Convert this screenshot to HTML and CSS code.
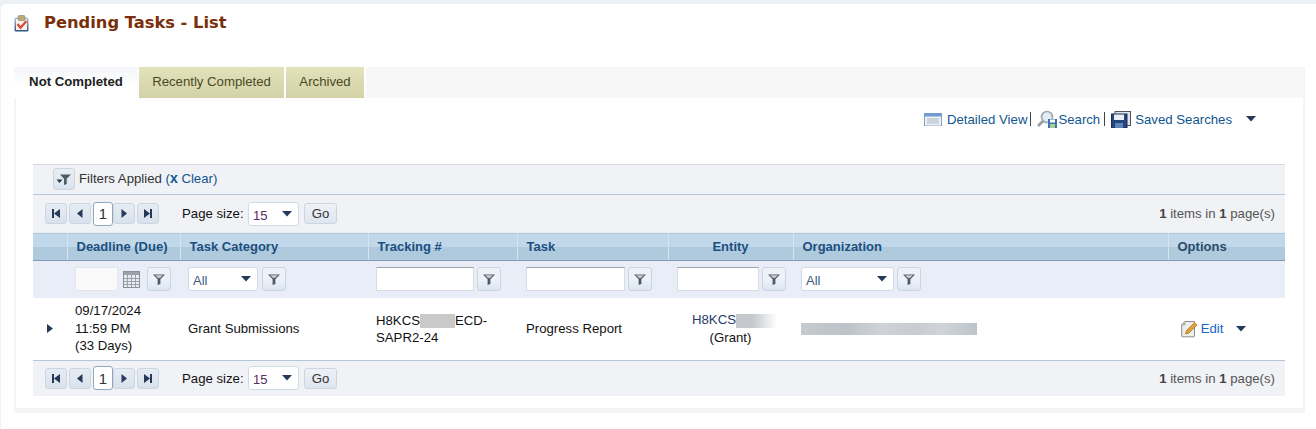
FILE: index.html
```html
<!DOCTYPE html>
<html lang="en">
<head>
<meta charset="utf-8">
<title>Pending Tasks - List</title>
<link rel="stylesheet" href="styles.css">
</head>
<body>
<svg class="defs" width="0" height="0" aria-hidden="true">
  <defs>
    <symbol id="funnel" viewBox="0 0 14 14"><path d="M1 2.5h12L8.4 7.2V12L5.6 13V7.2z" fill="#4f5b66"/><path d="M3.2 3.2h7.6L8 6H6z" fill="#c5ccd3"/></symbol>
    <symbol id="caret" viewBox="0 0 10 6"><path d="M0 0h10L5 5.5z" fill="#25395a"/></symbol>
    <linearGradient id="board" x1="0" y1="0" x2="0" y2="1"><stop offset="0" stop-color="#b9c6da"/><stop offset="1" stop-color="#2f4f86"/></linearGradient>
  </defs>
</svg>
<main class="page">
  <header class="title-row">
    <svg class="title-icon" viewBox="0 0 15 17" width="15" height="17" aria-hidden="true">
      <rect x="0.5" y="2.5" width="14" height="14" rx="1.5" fill="url(#board)"/>
      <rect x="2" y="4" width="11" height="11" fill="#f6f3ee"/>
      <rect x="4" y="0.5" width="7" height="5" rx="1.2" fill="#b9a97f" stroke="#8d8263" stroke-width=".6"/>
      <path d="M3.5 9l3 3.7L12.5 6" fill="none" stroke="#e2452f" stroke-width="2.2"/>
    </svg>
    <h1>Pending Tasks - List</h1>
  </header>

  <section class="panel">
    <nav class="tabs">
      <a class="tab tab-active">Not Completed</a>
      <a class="tab tab-recent">Recently Completed</a>
      <a class="tab tab-arch">Archived</a>
      <span class="tab-fill"></span>
    </nav>

    <div class="actions">
      <svg class="ic-view" viewBox="0 0 18 13" width="18" height="13" aria-hidden="true">
        <rect x="0.5" y="0.5" width="17" height="12.5" fill="#eef3f8" stroke="#7f9fc4"/>
        <rect x="0.5" y="0.5" width="17" height="3" fill="#6f9bd0"/>
        <path d="M3 6h12M3 8h12M3 10h12" stroke="#a9b3bd"/>
      </svg>
      <a class="act act-detail">Detailed View</a><span class="sep"></span>
      <svg class="ic-search" viewBox="0 0 21 19" width="21" height="19" aria-hidden="true">
        <circle cx="10" cy="7" r="5.5" fill="#e4ecf3" stroke="#9aa6b0" stroke-width="1.6"/>
        <path d="M6 11l-5 5" stroke="#9a9a9a" stroke-width="2.6"/>
        <rect x="11" y="9" width="9" height="9" fill="#3f73ad"/>
        <rect x="13" y="9.5" width="5" height="3" fill="#fff"/>
        <rect x="13" y="14" width="5" height="4" fill="#a8d08d"/>
      </svg>
      <a class="act">Search</a><span class="sep sep-wide"></span>
      <svg class="ic-save" viewBox="0 0 20 17" width="20" height="17" aria-hidden="true">
        <rect x="4" y="0.5" width="15.5" height="14" fill="#dfe5ec" stroke="#4b5563"/>
        <rect x="0.5" y="3" width="15.5" height="14" fill="#24467c" stroke="#1c2f52"/>
        <rect x="3" y="3.5" width="10" height="5.5" fill="#e8eef5"/>
        <rect x="4" y="12" width="8" height="5" fill="#5c86bb"/>
      </svg>
      <a class="act act-saved">Saved Searches</a>
      <svg class="caret act-caret" width="10" height="6" aria-hidden="true"><use href="#caret"/></svg>
    </div>

    <div class="grid">
      <div class="filter-note">
        <span class="btn-square"><svg viewBox="0 0 16 14" width="16" height="14" aria-hidden="true"><path d="M4 2.5h11l-4.3 4.3V12L8 13V6.8z" fill="#4f5b66"/><path d="M0.5 7.5h6L3.5 11z" fill="#25395a"/></svg></span>
        <span class="filter-text">Filters Applied <span class="clear">(<b class="x">x</b> <a>Clear</a>)</span></span>
      </div>

      <div class="pager pager-top">
        <div class="pg-btns">
          <span class="pg"><svg width="8" height="9" viewBox="0 0 8 9"><path d="M0 0h2v9H0zM8 0v9L2 4.5z" fill="#25395a"/></svg></span>
          <span class="pg"><svg width="6" height="9" viewBox="0 0 6 9"><path d="M5.5 0v9L0 4.5z" fill="#25395a"/></svg></span>
          <span class="pg pg-cur">1</span>
          <span class="pg"><svg width="6" height="9" viewBox="0 0 6 9"><path d="M.5 0v9L6 4.5z" fill="#25395a"/></svg></span>
          <span class="pg"><svg width="8" height="9" viewBox="0 0 8 9"><path d="M6 0h2v9H6zM0 0v9l6-4.5z" fill="#25395a"/></svg></span>
        </div>
        <span class="pg-label">Page size:</span>
        <span class="combo combo-size"><span class="combo-v">15</span><svg class="caret" width="10" height="6"><use href="#caret"/></svg></span>
        <span class="go">Go</span>
        <span class="pg-info"><b>1</b> items in <b>1</b> page(s)</span>
      </div>

      <table class="tbl">
        <colgroup>
          <col class="c-exp"><col class="c-dead"><col class="c-cat"><col class="c-track"><col class="c-task"><col class="c-ent"><col class="c-org"><col class="c-opt">
        </colgroup>
        <thead>
          <tr class="head">
            <th></th><th>Deadline (Due)</th><th>Task Category</th><th>Tracking #</th><th>Task</th><th class="ctr">Entity</th><th>Organization</th><th class="opt-h">Options</th>
          </tr>
          <tr class="filters">
            <td></td>
            <td class="f-dead"><div class="f"><span class="inp inp-date"></span><svg class="cal" viewBox="0 0 17 17" width="17" height="17" aria-hidden="true"><rect x=".5" y=".5" width="16" height="16" fill="#e8ebef" stroke="#8a9097"/><rect x="1" y="1" width="15" height="3" fill="#9aa2aa"/><path d="M1 7.5h15M1 10.5h15M1 13.5h15M4.5 4v12M8.5 4v12M12.5 4v12" stroke="#9aa2aa"/></svg><span class="fbtn"><svg width="14" height="14"><use href="#funnel"/></svg></span></div></td>
            <td class="f-cat"><div class="f"><span class="combo combo-cat"><span class="combo-v all">All</span><svg class="caret" width="10" height="6"><use href="#caret"/></svg></span><span class="fbtn"><svg width="14" height="14"><use href="#funnel"/></svg></span></div></td>
            <td><div class="f"><span class="inp inp-track"></span><span class="fbtn"><svg width="14" height="14"><use href="#funnel"/></svg></span></div></td>
            <td class="shift"><div class="f"><span class="inp inp-task"></span><span class="fbtn"><svg width="14" height="14"><use href="#funnel"/></svg></span></div></td>
            <td class="shift"><div class="f"><span class="inp inp-ent"></span><span class="fbtn"><svg width="14" height="14"><use href="#funnel"/></svg></span></div></td>
            <td><div class="f"><span class="combo combo-org"><span class="combo-v all">All</span><svg class="caret" width="10" height="6"><use href="#caret"/></svg></span><span class="fbtn"><svg width="14" height="14"><use href="#funnel"/></svg></span></div></td>
            <td></td>
          </tr>
        </thead>
        <tbody>
          <tr class="row">
            <td class="exp"><svg width="6" height="9" viewBox="0 0 6 9"><path d="M0 0v9l6-4.5z" fill="#25395a"/></svg></td>
            <td>09/17/2024<br>11:59 PM<br>(33 Days)</td>
            <td>Grant Submissions</td>
            <td class="track">H8KCS<span class="blur blur-track"></span>ECD-<br>SAPR2-24</td>
            <td class="shift">Progress Report</td>
            <td class="ent"><a class="ent-link">H8KCS<span class="blur blur-ent"></span></a><br>(Grant)</td>
            <td><span class="blur blur-org"></span></td>
            <td class="opts">
              <svg class="ic-edit" viewBox="0 0 18 18" width="18" height="18" aria-hidden="true">
                <path d="M5 1.5h9.5v14.5a.8.8 0 0 1-.8.8H2.5a.8.8 0 0 1-.8-.8V5z" fill="#eeeeec" stroke="#8d8d8d"/>
                <path d="M1.7 5L5 1.5V5z" fill="#cfcfcf" stroke="#8d8d8d" stroke-width=".6"/>
                <path d="M5.5 14l1-3.5 8-8 2.5 2.5-8 8z" fill="#e3a237" stroke="#a06f1f" stroke-width=".7"/>
              </svg>
              <a class="edit">Edit</a>
              <svg class="caret edit-caret" width="10" height="6"><use href="#caret"/></svg>
            </td>
          </tr>
        </tbody>
      </table>

      <div class="pager pager-bottom">
        <div class="pg-btns">
          <span class="pg"><svg width="8" height="9" viewBox="0 0 8 9"><path d="M0 0h2v9H0zM8 0v9L2 4.5z" fill="#25395a"/></svg></span>
          <span class="pg"><svg width="6" height="9" viewBox="0 0 6 9"><path d="M5.5 0v9L0 4.5z" fill="#25395a"/></svg></span>
          <span class="pg pg-cur">1</span>
          <span class="pg"><svg width="6" height="9" viewBox="0 0 6 9"><path d="M.5 0v9L6 4.5z" fill="#25395a"/></svg></span>
          <span class="pg"><svg width="8" height="9" viewBox="0 0 8 9"><path d="M6 0h2v9H6zM0 0v9l6-4.5z" fill="#25395a"/></svg></span>
        </div>
        <span class="pg-label">Page size:</span>
        <span class="combo combo-size"><span class="combo-v">15</span><svg class="caret" width="10" height="6"><use href="#caret"/></svg></span>
        <span class="go">Go</span>
        <span class="pg-info"><b>1</b> items in <b>1</b> page(s)</span>
      </div>
    </div>
  </section>
</main>
</body>
</html>
```
FILE: styles.css
```css
* { box-sizing: border-box; }
html, body { margin: 0; padding: 0; height: 100%; }
body {
  background: #eef1f4;
  padding-top: 4px;
  font-family: "Liberation Sans", Arial, sans-serif;
  font-size: 13.2px;
  color: #111;
  overflow: hidden;
}
.defs { display: block; height: 0; }
.page {
  background: #fff;
  height: 425px;
  margin-left: 1px;
  border-radius: 5px 0 0 0;
  padding: 0 11px 0 13px;
}
.title-row {
  display: flex;
  align-items: center;
  height: 63px;
  padding-bottom: 26px;
}
.title-icon { flex: none; margin-right: 15px; margin-top: 1px; }
h1 {
  margin: 0;
  font-family: "DejaVu Sans", Verdana, sans-serif;
  font-size: 16.3px;
  font-weight: bold;
  color: #7a2f0a;
}
.panel {
  width: 1291px;
  height: 346px;
  border: 2px solid #f5f5f5;
  border-top: 0;
  border-bottom-width: 5px;
  background: #fff;
}
.tabs {
  display: flex;
  gap: 2px;
  height: 31px;
  margin-left: -2px;
  background: #fff;
}
.tab {
  display: flex;
  align-items: center;
  justify-content: center;
  height: 31px;
  color: #4a4a22;
  padding-bottom: 3px;
  background: linear-gradient(#e2e2bc, #d3d2a7);
}
.tab-fill { flex: 1; background: #f7f7f7; }
.tab-active {
  width: 123px;
  padding-left: 1px;
  background: linear-gradient(#f4f5f8, #fff 60%);
  color: #222;
  font-weight: bold;
}
.tab-recent { width: 145px; }
.tab-arch { width: 78px; }
.actions {
  display: flex;
  align-items: center;
  height: 66px;
  padding: 0 47px 24px 0;
  justify-content: flex-end;
  color: #1e5a93;
}
.act { color: #10568f; }
.act-detail { margin-left: 5px; }
.act-saved { margin-left: 4px; }
.act-caret { margin-left: 14px; }
.sep { width: 1px; height: 14px; background: #444; margin: 0 6px 0 3px; }
.sep-wide { margin-left: 4px; }
.grid { width: 1252px; margin-left: 17px; }
.filter-note {
  display: flex;
  align-items: center;
  height: 31px;
  padding: 0 0 1px 20px;
  gap: 4px;
  background: #f0f2f6;
  border-top: 1px solid #d5d8dc;
  border-bottom: 1px solid #b4c9da;
  color: #333;
}
.filter-text { margin-bottom: 2px; }
.btn-square {
  display: flex;
  align-items: center;
  justify-content: center;
  width: 22px;
  height: 22px;
  border: 1px solid #ccd5df;
  border-radius: 3px;
  background: linear-gradient(#e9eef4, #dbe4ee);
}
.x { font-size: 14px; }
.clear { color: #10568f; }
.pager {
  display: flex;
  align-items: center;
  background: #f0f2f6;
  padding-left: 12px;
  padding-right: 10px;
  color: #222;
}
.pager-top { height: 37px; }
.pager-bottom { height: 36px; border-top: 1px solid #b4c6d6; }
.pg-btns { display: flex; align-items: center; gap: 2px; width: 137px; }
.pg {
  display: flex;
  align-items: center;
  justify-content: center;
  width: 22px;
  height: 21px;
  border: 1px solid #cdd6e0;
  border-radius: 3px;
  background: linear-gradient(#e6ecf3, #d9e2ec);
}
.pg-cur {
  width: 20px;
  height: 24px;
  margin-right: -2px;
  background: #fff;
  border-color: #8ea7c2;
  font-size: 15px;
  color: #333;
  z-index: 1;
}
.pg-label { width: 66px; color: #111; }
.combo {
  display: flex;
  align-items: center;
  justify-content: space-between;
  height: 24px;
  padding: 0 6px 0 4px;
  background: #fff;
  border: 1px solid #cfdbe8;
  border-radius: 3px;
}
.combo-size { width: 51px; }
.combo-v { margin-top: 3px; color: #5b2a62; font-size: 13px; }
.combo-v.all { color: #3c5a80; }
.go {
  display: flex;
  align-items: center;
  justify-content: center;
  width: 33px;
  height: 21px;
  margin-left: 5px;
  color: #333;
  border: 1px solid #cdd6e0;
  border-radius: 3px;
  background: linear-gradient(#eef2f7, #dde5ee);
}
.pg-info { margin-left: auto; color: #555; }
.pg-info b { color: #444; }
.tbl {
  width: 1252px;
  border-collapse: collapse;
  table-layout: fixed;
}
.c-exp { width: 34px; }
.c-dead { width: 113px; }
.c-cat { width: 188px; }
.c-track { width: 149px; }
.c-task { width: 151px; }
.c-ent { width: 125px; }
.c-org { width: 375px; }
.c-opt { width: 117px; }
.head { height: 28px; background: linear-gradient(#c1d8eb 0 50%, #b0cadd 50% 100%); border-top: 1px solid #e8eef4; }
.head th {
  padding: 0 0 0 9px;
  text-align: left;
  font-size: 13px;
  font-weight: bold;
  color: #1b4f7f;
  border-left: 1px solid #d6e4ef;
  border-bottom: 1px solid #7f9ab2;
}
.head th:first-child { border-left: 0; }
.head th.ctr { text-align: center; padding: 0; }
.head th.opt-h { color: #2b4a6b; }
.filters { height: 37px; background: #e9edf7; }
.filters td { padding: 0 0 0 8px; }
.filters td.shift { padding-left: 9px; }
.f { display: flex; align-items: center; gap: 3px; height: 24px; }
.inp {
  display: block;
  height: 24px;
  background: #fff;
  border: 1px solid #d8dbe0;
  border-top-color: #9ca3ab;
}
.inp-date { width: 43px; border-color: #e4e6ea; background: #fafafa; margin-right: 2px; }
.cal { margin-right: 4px; }
.inp-track { width: 98px; }
.inp-task { width: 99px; }
.inp-ent { width: 82px; }
.f-cat .f { gap: 4px; }
.combo-cat { width: 70px; }
.combo-org { width: 93px; }
.fbtn {
  display: flex;
  align-items: center;
  justify-content: center;
  width: 24px;
  height: 24px;
  border: 1px solid #ccd5df;
  border-radius: 3px;
  background: linear-gradient(#eef2f8 50%, #dbe6f1);
}
.row { height: 62px; }
.row td {
  padding: 0 0 0 8px;
  line-height: 17.5px;
  color: #111;
  vertical-align: middle;
}
.row td.shift { padding-left: 9px; }
.row td.exp { padding-left: 14px; }
.row td.track { padding-top: 1px; }
.blur { display: inline-block; vertical-align: middle; }
.blur-track { width: 35px; height: 14px; background: #c9c9c9; }
.blur-ent { width: 41px; height: 14px; background: linear-gradient(90deg, #c5c9cd 40%, #fff); }
.blur-org {
  display: block;
  width: 176px;
  height: 12px;
  background: linear-gradient(90deg, #c7cbcf, #bcc2c8 25%, #cfd3d7 45%, #c8ccd0 65%, #d0d4d8 80%, #bcc4cb);
}
.row td.ent { padding-left: 0; text-align: center; }
.ent-link { color: #2a3a6b; margin-left: 8px; }
.opts { white-space: nowrap; }
.row td.opts { padding-left: 12px; }
.ic-edit { vertical-align: middle; margin-right: -1px; }
.edit { color: #1565c8; vertical-align: middle; }
.edit-caret { margin-left: 9px; vertical-align: middle; }
```
